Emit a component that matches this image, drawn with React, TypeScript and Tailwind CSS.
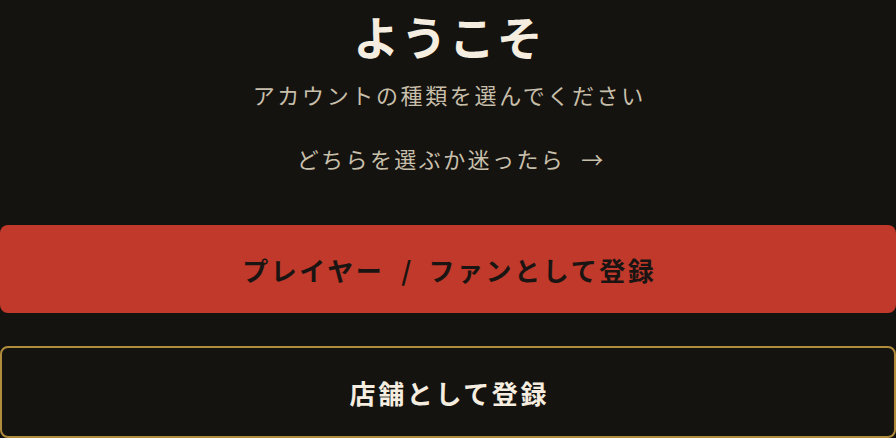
export default function App() {
  return (
    <div
      className="min-h-screen bg-[#14130f] text-[#f3ecdc]"
      style={{ fontFamily: '"Noto Sans CJK JP", "Noto Sans", sans-serif' }}
    >
      <div className="flex flex-col items-center pt-[8px]">
        {/* Heading */}
        <h1 className="pl-[0.04em] text-[46px] font-bold leading-[55px] tracking-[0.04em] text-[#f5eee0]">
          ようこそ
        </h1>
        <p className="mt-[15px] pl-[0.12em] text-[22px] leading-[33px] tracking-[0.12em] text-[#c8bfab]">
          アカウントの種類を選んでください
        </p>

        {/* Help link */}
        <a
          href="#"
          className="mt-[31px] flex items-center pl-[4px] text-[22px] leading-[33px] tracking-[0.11em] text-[#c8bfab]"
        >
          どちらを選ぶか迷ったら
          <span className="ml-[16px] tracking-normal">→</span>
        </a>
      </div>

      {/* Account type buttons */}
      <div className="mt-[50px] flex flex-col gap-[33px]">
        <button className="flex h-[88px] w-full items-center justify-center rounded-lg bg-[#c0392b] pl-[0.1em] text-[26px] font-bold tracking-[0.1em] text-[#1a1512]">
          プレイヤー
          <span className="mx-[17px] tracking-normal">/</span>
          ファンとして登録
        </button>
        <button className="flex h-[92px] w-full items-center justify-center rounded-lg border-2 border-[#b08d3c] bg-[#14130f] pl-[0.1em] text-[26px] font-bold tracking-[0.1em] text-[#f5eee0]">
          店舗として登録
        </button>
      </div>
    </div>
  );
}
